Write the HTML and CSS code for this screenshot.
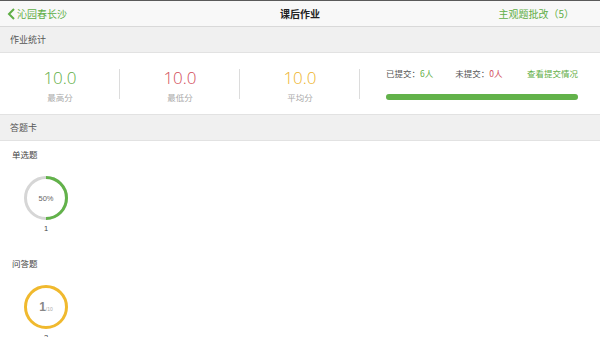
FILE: index.html
```html
<!DOCTYPE html>
<html lang="zh-CN">
<head>
    <meta charset="UTF-8">
    <meta name="viewport" content="width=device-width, initial-scale=1.0">
    <title>课后作业</title>
    <link rel="stylesheet" href="styles.css">
</head>
<body>
    <div class="navbar">
        <a class="nav-back" href="#">
            <svg class="chevron" width="9" height="12" viewBox="0 0 9 12"><path d="M7 1 L2 6 L7 11" fill="none" stroke="#5fae46" stroke-width="2"/></svg>
            沁园春长沙
        </a>
        <div class="nav-title">课后作业</div>
        <a class="nav-right" href="#">主观题批改（5）</a>
    </div>

    <div class="section-head">作业统计</div>
    <div class="stats">
        <div class="stat">
            <div class="stat-num green">10.0</div>
            <div class="stat-label">最高分</div>
        </div>
        <div class="stat">
            <div class="stat-num red">10.0</div>
            <div class="stat-label">最低分</div>
        </div>
        <div class="stat">
            <div class="stat-num yellow">10.0</div>
            <div class="stat-label">平均分</div>
        </div>
        <div class="submit">
            <div class="submit-row">
                <span class="submit-item">已提交：<span class="green">6人</span></span>
                <span class="submit-item">未提交：<span class="red">0人</span></span>
                <a class="submit-link" href="#">查看提交情况</a>
            </div>
            <div class="progress"><div class="progress-fill" style="width: 100%"></div></div>
        </div>
    </div>

    <div class="section-head">答题卡</div>
    <div class="card">
        <div class="card-title">单选题</div>
        <div class="ring-list">
            <div class="ring-item">
                <div class="ring">
                    <svg width="44" height="44" viewBox="0 0 44 44">
                        <circle cx="22" cy="22" r="20.5" fill="none" stroke="#d6d6d6" stroke-width="3"/>
                        <path d="M22 1.5 A20.5 20.5 0 0 1 22 42.5" fill="none" stroke="#62b24a" stroke-width="3"/>
                    </svg>
                    <span class="ring-text">50%</span>
                </div>
                <div class="ring-num">1</div>
            </div>
        </div>

        <div class="card-title">问答题</div>
        <div class="ring-list">
            <div class="ring-item">
                <div class="ring">
                    <svg width="44" height="44" viewBox="0 0 44 44">
                        <circle cx="22" cy="22" r="20.5" fill="none" stroke="#f0b92e" stroke-width="3"/>
                    </svg>
                    <span class="ring-text"><b class="ring-score">1</b><small>/10</small></span>
                </div>
                <div class="ring-num">2</div>
            </div>
        </div>
    </div>
</body>
</html>
```

FILE: styles.css
```css
body {
    margin: 0;
    padding: 0;
    font-family: "Noto Sans CJK SC", "Noto Sans", sans-serif;
    background-color: #ffffff;
    color: #444;
}
a {
    text-decoration: none;
}
.navbar {
    display: flex;
    align-items: center;
    justify-content: space-between;
    height: 25px;
    padding: 0 26px 0 7px;
    background-color: #f8f8f8;
    border-top: 1px solid #5a5a5a;
    border-bottom: 1px solid #d9d9d9;
    position: relative;
}
.nav-back {
    display: flex;
    align-items: center;
    gap: 1px;
    color: #5fae46;
    font-size: 10px;
}
.nav-title {
    position: absolute;
    left: 0;
    right: 0;
    text-align: center;
    font-size: 10px;
    font-weight: bold;
    color: #222;
    pointer-events: none;
}
.nav-right {
    color: #5fae46;
    font-size: 10px;
}
.section-head {
    height: 25px;
    line-height: 25px;
    padding-left: 10px;
    background-color: #f0f0f0;
    border-bottom: 1px solid #e2e2e2;
    font-size: 9px;
    color: #555;
}
.stats {
    display: flex;
    height: 61px;
    border-bottom: 1px solid #e2e2e2;
}
.stat {
    position: relative;
    width: 120px;
    box-sizing: border-box;
    padding-top: 15px;
    display: flex;
    flex-direction: column;
    align-items: center;
}
.stat::after {
    content: "";
    position: absolute;
    right: 0;
    top: 16px;
    height: 30px;
    border-right: 1px solid #dcdcdc;
}
.stat-num {
    font-family: "Open Sans", "Noto Sans", sans-serif;
    font-weight: 300;
    font-size: 17px;
    line-height: 20px;
}
.stat-label {
    font-size: 8.5px;
    line-height: 18px;
    color: #aaa;
}
.green {
    color: #5fae46;
}
.red {
    color: #d24c5a;
}
.yellow {
    color: #eeb32a;
}
.submit {
    flex: 1;
    padding: 14px 22px 0 26px;
}
.submit-row {
    display: flex;
    align-items: center;
    font-size: 8.5px;
    color: #555;
    height: 12px;
}
.submit-item {
    margin-right: 22px;
}
.submit-link {
    margin-left: auto;
    color: #5fae46;
}
.progress {
    margin-top: 15px;
    height: 6px;
    border-radius: 3px;
    background-color: #e6e6e6;
}
.progress-fill {
    height: 100%;
    border-radius: 3px;
    background-color: #62b24a;
}
.card {
    padding: 7px 0 0 12px;
}
.card-title {
    font-size: 8.5px;
    line-height: 12px;
    color: #444;
}
.ring-list {
    display: flex;
    gap: 20px;
    padding: 16px 0 23px 12px;
}
.ring-item {
    display: flex;
    flex-direction: column;
    align-items: center;
}
.ring {
    position: relative;
    width: 44px;
    height: 44px;
}
.ring svg {
    display: block;
}
.ring-text {
    position: absolute;
    left: 0;
    right: 0;
    top: 0;
    bottom: 0;
    display: flex;
    align-items: center;
    justify-content: center;
    font-family: "Liberation Sans", Arial, sans-serif;
    font-size: 7.5px;
    color: #666;
}
.ring-score {
    font-size: 12px;
    color: #888;
}
.ring-text small {
    font-size: 5px;
    color: #aaa;
    margin-top: 4px;
}
.ring-num {
    margin-top: 4px;
    line-height: 10px;
    font-family: "Liberation Sans", Arial, sans-serif;
    font-size: 7.5px;
    color: #444;
}
```
